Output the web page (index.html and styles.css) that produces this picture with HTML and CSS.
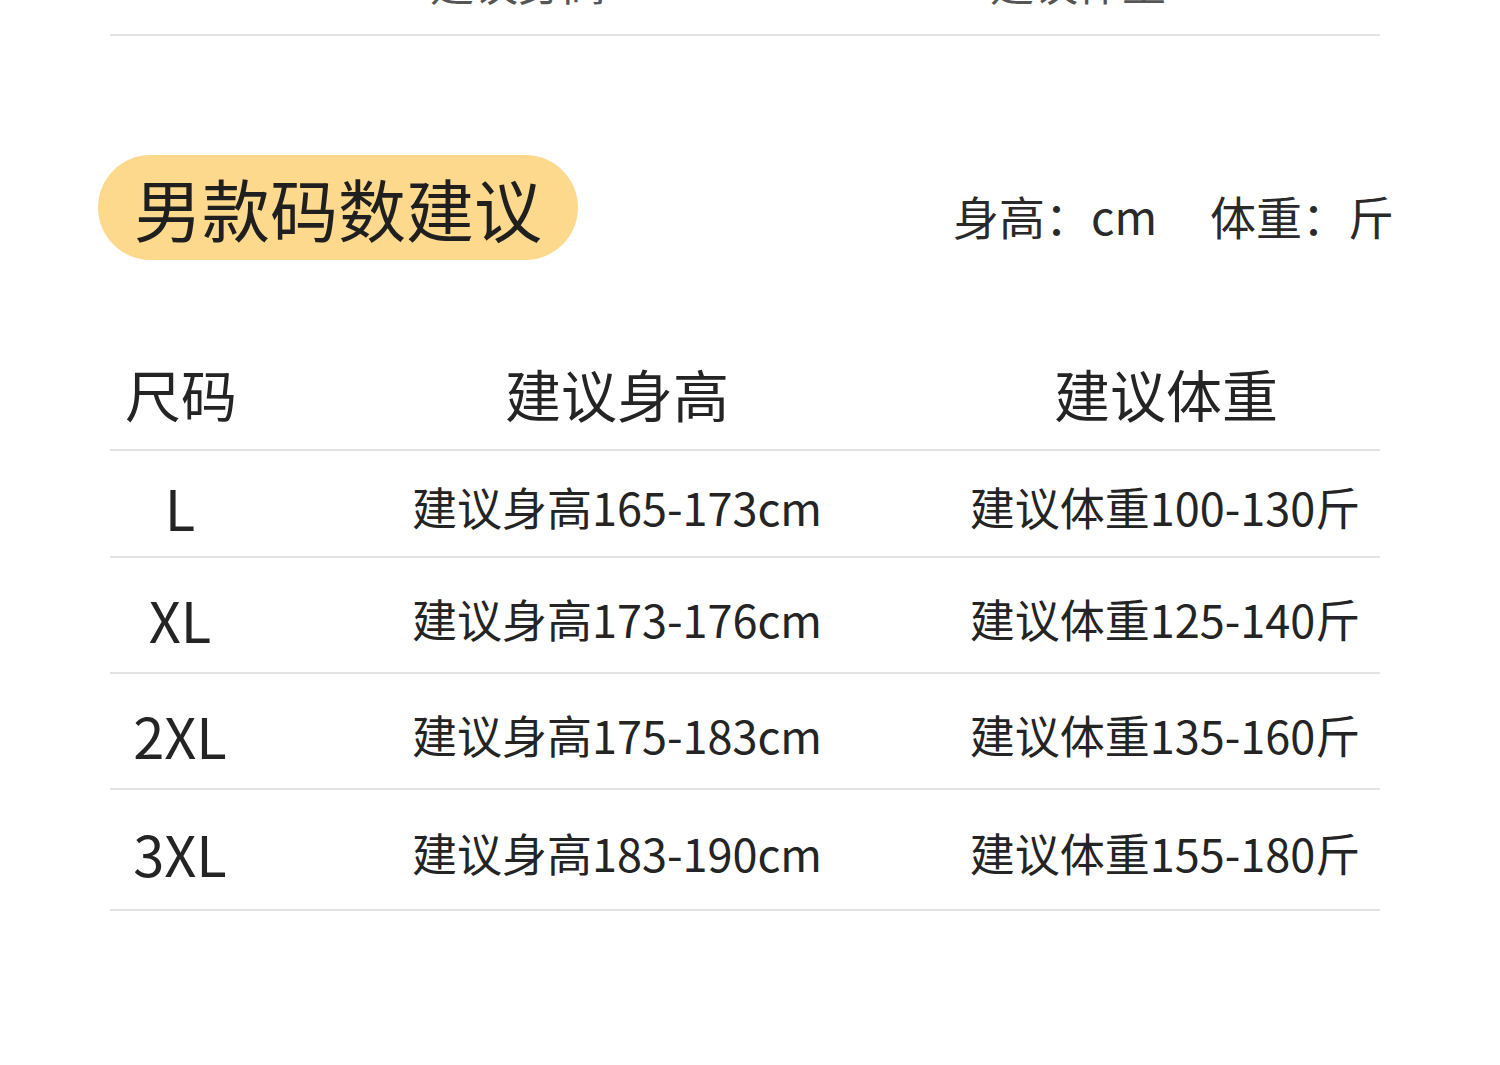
FILE: index.html
```html
<!DOCTYPE html>
<html lang="zh-CN">
<head>
<meta charset="utf-8">
<title>男款码数建议</title>
<link rel="stylesheet" href="styles.css">
</head>
<body>
<div class="page">
  <div class="prev-row">
    <span class="prev-a">建议身高</span>
    <span class="prev-b">建议体重</span>
  </div>
  <div class="title-bar">
    <div class="pill">男款码数建议</div>
    <div class="units"><span>身高：cm</span><span>体重：斤</span></div>
  </div>
  <div class="table">
    <div class="row head">
      <div class="c1">尺码</div>
      <div class="c2">建议身高</div>
      <div class="c3">建议体重</div>
    </div>
    <div class="row r1">
      <div class="c1 size">L</div>
      <div class="c2">建议身高165-173cm</div>
      <div class="c3">建议体重100-130斤</div>
    </div>
    <div class="row r2">
      <div class="c1 size">XL</div>
      <div class="c2">建议身高173-176cm</div>
      <div class="c3">建议体重125-140斤</div>
    </div>
    <div class="row r3">
      <div class="c1 size">2XL</div>
      <div class="c2">建议身高175-183cm</div>
      <div class="c3">建议体重135-160斤</div>
    </div>
    <div class="row r4">
      <div class="c1 size">3XL</div>
      <div class="c2">建议身高183-190cm</div>
      <div class="c3">建议体重155-180斤</div>
    </div>
  </div>
</div>
</body>
</html>
```
FILE: styles.css
```css
html, body {
  margin: 0;
  padding: 0;
  background: #ffffff;
}
body {
  font-family: "Noto Sans CJK SC", "Noto Sans", sans-serif;
  color: #242424;
}
.page {
  width: 1500px;
  height: 1065px;
  overflow: hidden;
  box-sizing: border-box;
  padding: 0 120px 0 110px;
}
.prev-row {
  height: 34px;
  border-bottom: 2px solid #e3e3e3;
  position: relative;
  overflow: hidden;
}
.prev-a, .prev-b {
  position: absolute;
  bottom: 30px;
  font-size: 44px;
  line-height: 44px;
  color: #555;
}
.prev-a { left: 320px; }
.prev-b { left: 880px; }
.title-bar {
  display: flex;
  justify-content: space-between;
  align-items: center;
  margin-top: 119px;
  margin-left: -12px;
  margin-right: -14px;
}
.pill {
  width: 480px;
  height: 105px;
  box-sizing: border-box;
  border-radius: 53px;
  background: #fcd98d;
  font-size: 68px;
  line-height: 105px;
  padding-left: 36px;
  letter-spacing: 0;
  color: #1f1f1f;
}
.units {
  display: flex;
  gap: 53px;
  font-size: 46px;
  padding-top: 14px;
  color: #2a2a2a;
}
.table {
  margin-top: 80px;
}
.row {
  display: grid;
  grid-template-columns: 140px 704px 1fr;
  align-items: center;
  border-bottom: 2px solid #e3e3e3;
  font-size: 45px;
  box-sizing: border-box;
}
.row > div {
  text-align: center;
  white-space: nowrap;
}
.row .c2 {
  padding-left: 30px;
}
.row .c3 {
  padding-right: 4px;
}
.head {
  height: 111px;
  font-size: 56px;
  padding-bottom: 4px;
}
.head .c1 { text-align: left; padding-left: 15px; }
.head .c3 { padding-right: 2px; }
.size {
  font-size: 56px;
}
.r1 { height: 107px; padding-top: 6px; }
.r2 { height: 116px; padding-top: 6px; }
.r3 { height: 116px; padding-top: 6px; }
.r4 { height: 121px; padding-top: 6px; }
```
